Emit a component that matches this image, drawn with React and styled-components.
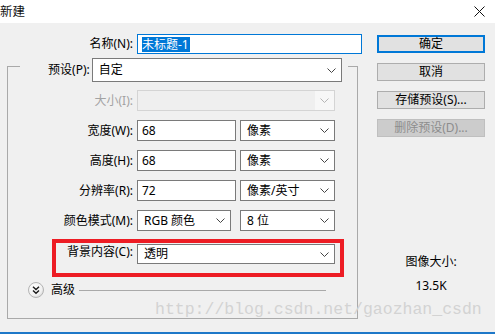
import React from 'react'
import styled, { createGlobalStyle } from 'styled-components';

const GlobalStyle = createGlobalStyle`
html, body {
    margin:0;
    padding:0;
    background:#f0f0f0;
}
body {
    font-family:"Noto Sans", "Noto Sans CJK SC", sans-serif;
    font-size:12px;
    color:#000;
}
`;

const Window = styled.div`
width:495px;
height:334px;
background:#f0f0f0;
position:relative;
overflow:hidden;
display:flex;
flex-direction:column;
`;

const TitleBar = styled.div`
height:23px;
background:#fff;
display:flex;
align-items:center;
justify-content:space-between;
padding-right:10px;
flex-shrink:0;
`;

const Title = styled.div`
font-size:12.5px;
line-height:16px;
margin-left:0;
color:#111;
`;

const Body = styled.div`
flex:1;
display:flex;
`;

const FormColumn = styled.div`
width:362px;
padding-top:11px;
display:flex;
flex-direction:column;
`;

const NameRow = styled.div`
display:flex;
align-items:center;
gap:4px;
height:20px;
`;

const Label = styled.div`
width:${({ $w }) => $w}px;
text-align:right;
line-height:16px;
white-space:nowrap;
color:${({ $disabled }) => ($disabled ? '#a3a3a3' : '#000')};
`;

const TextInput = styled.div`
box-sizing:border-box;
width:${({ $w }) => ($w ? `${$w}px` : '100%')};
height:${({ $h }) => $h || 21}px;
background:#fff;
border:1px solid ${({ $focused }) => ($focused ? '#0078d7' : '#7a7a7a')};
padding-left:4px;
display:flex;
align-items:center;
line-height:16px;
`;

const Selected = styled.span`
background:#0078d7;
color:#fff;
line-height:15px;
padding-right:1px;
`;

const GroupBox = styled.div`
box-sizing:border-box;
margin-top:12px;
margin-left:7px;
width:351px;
height:253px;
border:1px solid #a9a9a9;
display:flex;
flex-direction:column;
`;

const PresetRow = styled.div`
box-sizing:border-box;
margin-top:-9px;
margin-left:12px;
width:328px;
height:24px;
padding-right:6px;
background:#f0f0f0;
display:flex;
align-items:center;
gap:2px;
`;

const SelectBox = styled.div`
box-sizing:border-box;
width:${({ $w }) => ($w ? `${$w}px` : '100%')};
height:${({ $h }) => $h || 21}px;
background:${({ $disabled }) => ($disabled ? '#efefef' : '#fff')};
border:1px solid ${({ $disabled }) => ($disabled ? '#d4d4d4' : '#7a7a7a')};
padding-left:6px;
display:flex;
align-items:center;
justify-content:space-between;
line-height:16px;
grid-column:${({ $span }) => ($span ? 'span 2' : 'auto')};
`;

const DropArea = styled.div`
width:19px;
height:100%;
background:#f7f7f7;
display:flex;
align-items:center;
justify-content:center;
`;

const ChevronSpot = styled.div`
width:14px;
height:100%;
display:flex;
align-items:center;
justify-content:flex-start;
flex-shrink:0;
`;

const Fields = styled.div`
margin-top:8px;
display:grid;
grid-template-columns:125px 99px 95px;
grid-auto-rows:21px;
column-gap:4px;
row-gap:9px;
align-items:center;
`;

const Highlight = styled.div`
box-sizing:border-box;
margin-top:8px;
margin-left:44px;
width:292px;
height:38px;
border:4px solid #ed1c24;
padding-top:1px;
display:flex;
align-items:flex-start;
gap:4px;
`;

const AdvancedRow = styled.div`
margin-top:5px;
margin-left:20px;
margin-right:31px;
height:16px;
display:flex;
align-items:center;
`;

const AdvancedText = styled.span`
margin-left:7px;
margin-right:4px;
line-height:16px;
`;

const Rule = styled.div`
flex:1;
height:1px;
background:#a9a9a9;
`;

const SideColumn = styled.div`
margin-left:15px;
width:108px;
padding-top:12px;
display:flex;
flex-direction:column;
`;

const Buttons = styled.div`
display:flex;
flex-direction:column;
gap:10px;
`;

const Button = styled.div`
box-sizing:border-box;
height:18px;
background:${({ $disabled }) => ($disabled ? '#cccccc' : '#e1e1e1')};
border:${({ $primary, $disabled }) =>
    $primary ? '2px solid #0078d7' : $disabled ? '1px solid #bfbfbf' : '1px solid #adadad'};
color:${({ $disabled }) => ($disabled ? '#8d8d8d' : '#000')};
display:flex;
align-items:center;
justify-content:center;
line-height:16px;
`;

const SizeInfo = styled.div`
margin-top:117px;
display:flex;
flex-direction:column;
align-items:center;
gap:8px;
line-height:16px;
`;

const Watermark = styled.div`
position:absolute;
left:155px;
top:300px;
font-family:"Liberation Mono", monospace;
font-size:16.5px;
line-height:20px;
color:#d3d3d3;
pointer-events:none;
`;

const BottomBar = styled.div`
height:2px;
background:#1e78c8;
flex-shrink:0;
`;

const Chevron = ({ color = '#444' }) => (
    <svg width="9" height="5" viewBox="0 0 9 5">
        <polyline points="0.5,0.5 4.5,4.5 8.5,0.5" fill="none" stroke={color} strokeWidth="1" />
    </svg>
)

const Select = ({ value, w, h, span, disabled }) => (
    <SelectBox $w={w} $h={h} $span={span} $disabled={disabled}>
        <span>{value}</span>
        {disabled ? (
            <DropArea><Chevron color="#b5b5b5" /></DropArea>
        ) : (
            <ChevronSpot><Chevron /></ChevronSpot>
        )}
    </SelectBox>
)

const CloseIcon = () => (
    <svg width="11" height="11" viewBox="0 0 11 11">
        <path d="M0.5 0.5 L10.5 10.5 M10.5 0.5 L0.5 10.5" stroke="#111" strokeWidth="1" />
    </svg>
)

const ExpandIcon = () => (
    <svg width="16" height="16" viewBox="0 0 16 16">
        <defs>
            <radialGradient id="btn" cx="0.4" cy="0.35" r="0.7">
                <stop offset="0" stopColor="#ffffff" />
                <stop offset="0.7" stopColor="#f1f1f1" />
                <stop offset="1" stopColor="#d6d6d6" />
            </radialGradient>
        </defs>
        <circle cx="8" cy="8" r="7.5" fill="url(#btn)" stroke="#b4b4b4" />
        <polyline points="5,4.8 8,7.6 11,4.8" fill="none" stroke="#1a1a1a" strokeWidth="1.4" />
        <polyline points="5,8.4 8,11.2 11,8.4" fill="none" stroke="#1a1a1a" strokeWidth="1.4" />
    </svg>
)

export default function App() {
    return (
        <>
            <GlobalStyle />
            <Window>
                <TitleBar>
                    <Title>新建</Title>
                    <CloseIcon />
                </TitleBar>
                <Body>
                    <FormColumn>
                        <NameRow>
                            <Label $w={133}>名称(N):</Label>
                            <TextInput $w={225} $h={20} $focused>
                                <Selected>未标题-1</Selected>
                            </TextInput>
                        </NameRow>
                        <GroupBox>
                            <PresetRow>
                                <Label $w={70}>预设(P):</Label>
                                <Select value="自定" w={251} h={24} />
                            </PresetRow>
                            <Fields>
                                <Label $w={125} $disabled>大小(I):</Label>
                                <Select value="" span disabled />

                                <Label $w={125}>宽度(W):</Label>
                                <TextInput>68</TextInput>
                                <Select value="像素" />

                                <Label $w={125}>高度(H):</Label>
                                <TextInput>68</TextInput>
                                <Select value="像素" />

                                <Label $w={125}>分辨率(R):</Label>
                                <TextInput>72</TextInput>
                                <Select value="像素/英寸" />

                                <Label $w={125}>颜色模式(M):</Label>
                                <Select value="RGB 颜色" w={94} />
                                <Select value="8 位" />
                            </Fields>
                            <Highlight>
                                <Label $w={77}>背景内容(C):</Label>
                                <Select value="透明" w={198} h={20} />
                            </Highlight>
                            <AdvancedRow>
                                <ExpandIcon />
                                <AdvancedText>高级</AdvancedText>
                                <Rule />
                            </AdvancedRow>
                        </GroupBox>
                    </FormColumn>
                    <SideColumn>
                        <Buttons>
                            <Button $primary>确定</Button>
                            <Button>取消</Button>
                            <Button>存储预设(S)...</Button>
                            <Button $disabled>删除预设(D)...</Button>
                        </Buttons>
                        <SizeInfo>
                            <span>图像大小:</span>
                            <span>13.5K</span>
                        </SizeInfo>
                    </SideColumn>
                </Body>
                <BottomBar />
                <Watermark>http://blog.csdn.net/gaozhan_csdn</Watermark>
            </Window>
        </>
    )
}
